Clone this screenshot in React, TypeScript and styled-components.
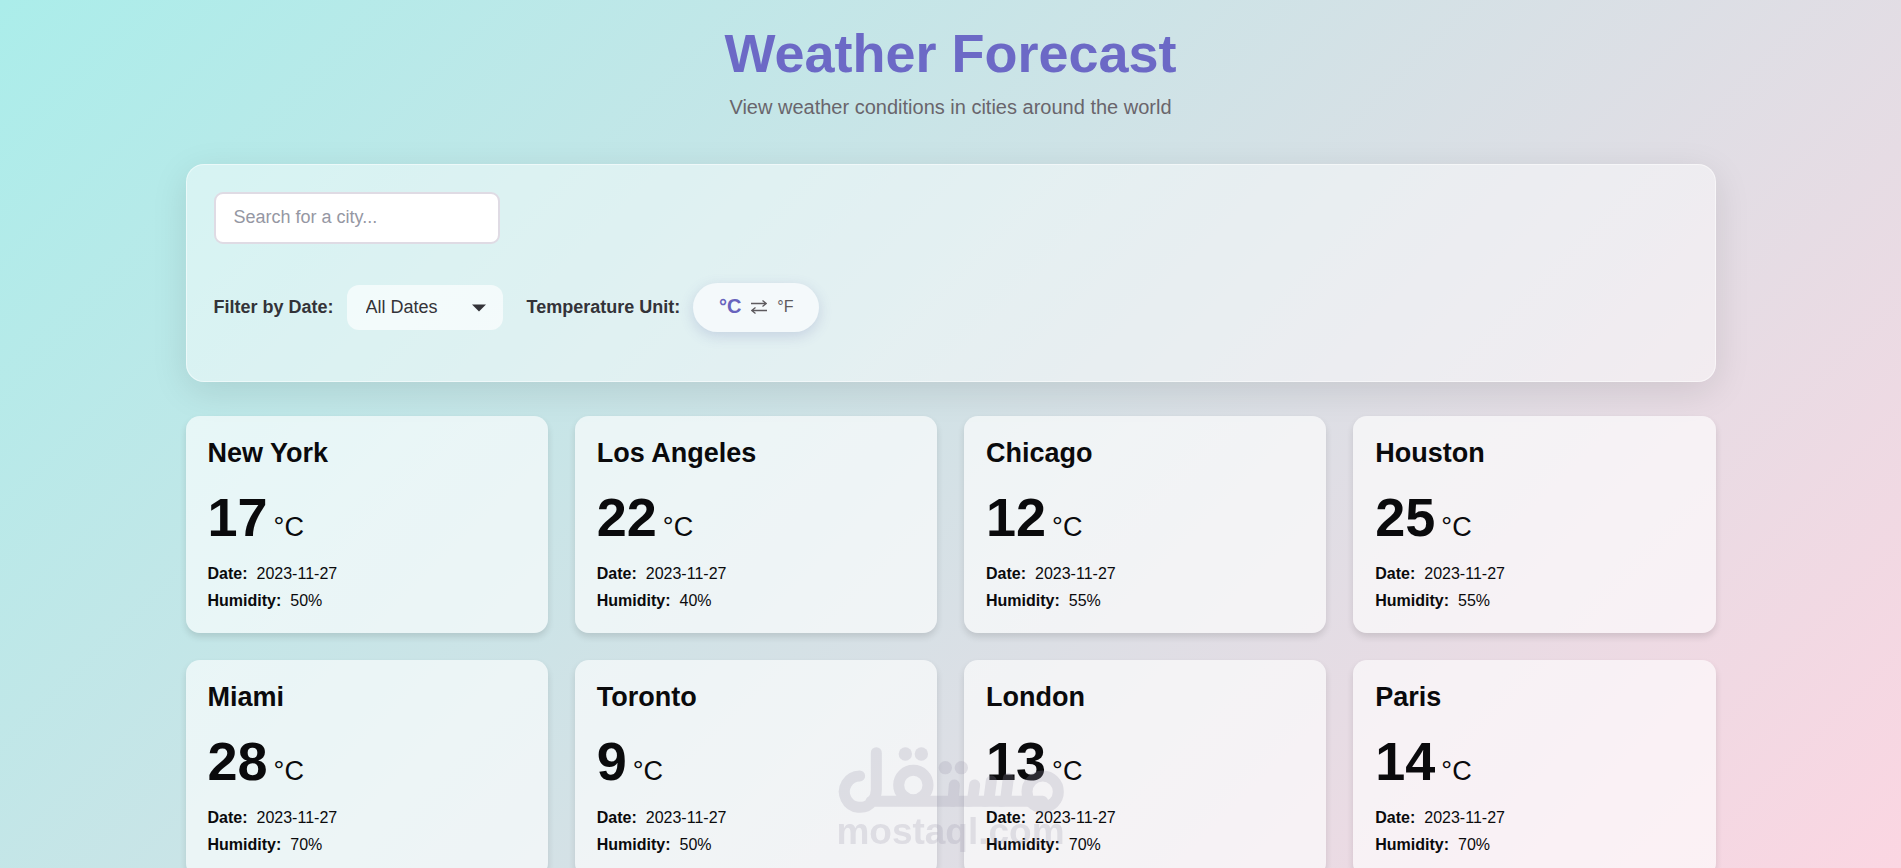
import React, { useState } from "react";
import styled, { createGlobalStyle } from "styled-components";

const GlobalStyle = createGlobalStyle`
  *, *::before, *::after { box-sizing: border-box; }
  html { scrollbar-width: none; }
  body {
    margin: 0;
    min-height: 100vh;
    font-family: "Liberation Sans", Arial, sans-serif;
    color: #0a0a0c;
    background: linear-gradient(135deg, #abedea 0%, #fbd6e2 100%) fixed;
  }
`;

const Page = styled.main`
  max-width: 1576px;
  margin: 0 auto;
  padding: 21px 23px 36px;
`;

const Header = styled.header`
  text-align: center;
  margin-bottom: 45px;
`;

const Title = styled.h1`
  margin: 0 0 10px;
  font-size: 54px;
  line-height: 64px;
  color: #6c69c6;
`;

const Subtitle = styled.p`
  margin: 0;
  font-size: 20px;
  line-height: 24px;
  color: #69656c;
`;

const Panel = styled.section`
  padding: 27px;
  min-height: 218px;
  border: 1px solid rgba(255, 255, 255, 0.5);
  border-radius: 18px;
  background: rgba(255, 255, 255, 0.45);
  box-shadow: 0 9px 36px rgba(0, 0, 0, 0.1);
  margin-bottom: 34px;
`;

const SearchInput = styled.input`
  display: block;
  width: 286px;
  height: 52px;
  padding: 0 18px 2px;
  border: 2px solid #dfdbe4;
  border-radius: 9px;
  background: #fff;
  color: #333338;
  font: 18px "Liberation Sans", Arial, sans-serif;
  &::placeholder { color: #9597a3; }
`;

const Filters = styled.div`
  display: flex;
  align-items: center;
  flex-wrap: wrap;
  gap: 24px;
  margin-top: 39px;
`;

const Field = styled.div`
  display: flex;
  align-items: center;
  gap: 13px;
`;

const FieldLabel = styled.label`
  font-size: 18px;
  font-weight: 700;
  color: #333338;
`;

const SelectWrap = styled.div`
  display: grid;
  align-items: center;
  > * { grid-area: 1 / 1; }
  > svg { justify-self: end; margin-right: 17px; pointer-events: none; }
`;

const Select = styled.select`
  appearance: none;
  width: 156px;
  height: 45px;
  padding: 0 40px 2px 19px;
  border: 0;
  border-radius: 12px;
  background: rgba(255, 255, 255, 0.65);
  color: #333338;
  font: 18px "Liberation Sans", Arial, sans-serif;
`;

const UnitToggle = styled.button`
  display: flex;
  align-items: center;
  justify-content: center;
  gap: 10px;
  width: 126px;
  height: 49px;
  padding: 0 0 2px;
  border: 0;
  border-radius: 25px;
  background: #f4f9fb;
  box-shadow: 0 4px 14px rgba(80, 90, 160, 0.2);
  font-family: inherit;
  color: #5d5a5e;
  cursor: pointer;
`;

const UnitOption = styled.span<{ $active: boolean }>`
  font-size: ${(p) => (p.$active ? 20 : 16)}px;
  font-weight: ${(p) => (p.$active ? 700 : 400)};
  color: ${(p) => (p.$active ? "#6863bd" : "#5d5a5e")};
`;

const Grid = styled.section`
  display: grid;
  grid-template-columns: repeat(auto-fill, minmax(315px, 1fr));
  gap: 27px;
`;

const Card = styled.article`
  padding: 21px 22px 19px;
  border-radius: 14px;
  background: rgba(255, 255, 255, 0.63);
  box-shadow: 0 4px 7px rgba(0, 0, 0, 0.12);
`;

const City = styled.h2`
  margin: 0 0 16px;
  font-size: 27px;
  line-height: 32px;
`;

const Temperature = styled.p`
  display: flex;
  align-items: baseline;
  gap: 6px;
  margin: 0 0 11px;
  line-height: 64px;
  font-size: 54px;
  font-weight: 700;
`;

const Degree = styled.span`
  font-size: 27px;
  line-height: 32px;
  font-weight: 400;
`;

const Detail = styled.p`
  display: flex;
  gap: 9px;
  margin: 0;
  font-size: 16px;
  line-height: 27px;
`;

const Watermark = styled.div`
  position: fixed;
  left: 50%;
  bottom: 18px;
  width: 230px;
  transform: translateX(-50%);
  display: flex;
  flex-direction: column;
  align-items: center;
  color: #9c98ac;
  opacity: 0.24;
  pointer-events: none;
  font-size: 37px;
  line-height: 36px;
  font-weight: 700;
`;

const CaretIcon = () => (
  <svg width="14" height="8" viewBox="0 0 14 8" aria-hidden="true">
    <path d="M0 .5h14L7 7.5z" fill="#333338" />
  </svg>
);

const SwapIcon = () => (
  <svg width="16" height="14" viewBox="0 0 16 14" fill="none" stroke="currentColor" strokeWidth="1.3" aria-hidden="true">
    <path d="M0 3.5h15M11.5.5l3.8 3-3.8 3M16 10.5H1M4.5 7.5l-3.8 3 3.8 3" />
  </svg>
);

const MarkLogo = () => (
  <svg width="228" height="68" viewBox="48 48 684 204" fill="none" stroke="currentColor" strokeWidth="33" strokeLinecap="round" aria-hidden="true">
    <path d="M116 138a47 47 0 1 0 38 76c8-10 12-20 12-34V68M150 214H665" />
    <circle cx="277" cy="165" r="44" />
    <circle cx="665" cy="185" r="47" />
    <path d="M400 165l-4 49M461 165l-5 35q-2 14-14 14M511 153l-6 47q-2 14-14 14M562 145l-7 55q-2 14-14 14" />
    <g fill="currentColor" stroke="none">
      <circle cx="253" cy="72" r="20" />
      <circle cx="301" cy="72" r="20" />
      <circle cx="373" cy="113" r="20" />
      <circle cx="421" cy="113" r="20" />
    </g>
  </svg>
);

type Weather = { city: string; celsius: number; humidity: number };

const date = "2023-11-27";
const forecasts: Weather[] = [
  { city: "New York", celsius: 17, humidity: 50 },
  { city: "Los Angeles", celsius: 22, humidity: 40 },
  { city: "Chicago", celsius: 12, humidity: 55 },
  { city: "Houston", celsius: 25, humidity: 55 },
  { city: "Miami", celsius: 28, humidity: 70 },
  { city: "Toronto", celsius: 9, humidity: 50 },
  { city: "London", celsius: 13, humidity: 70 },
  { city: "Paris", celsius: 14, humidity: 70 },
];

export default function App() {
  const [query, setQuery] = useState("");
  const [metric, setMetric] = useState(true);
  const visible = forecasts.filter((f) => f.city.toLowerCase().includes(query.toLowerCase()));

  return (
    <>
      <GlobalStyle />
      <Page>
        <Header>
          <Title>Weather Forecast</Title>
          <Subtitle>View weather conditions in cities around the world</Subtitle>
        </Header>
        <Panel>
          <SearchInput
            type="text"
            aria-label="Search for a city"
            placeholder="Search for a city..."
            value={query}
            onChange={(e) => setQuery(e.target.value)}
          />
          <Filters>
            <Field>
              <FieldLabel htmlFor="date-filter">Filter by Date:</FieldLabel>
              <SelectWrap>
                <Select id="date-filter" defaultValue="all">
                  <option value="all">All Dates</option>
                  <option value={date}>{date}</option>
                </Select>
                <CaretIcon />
              </SelectWrap>
            </Field>
            <Field>
              <FieldLabel htmlFor="unit-toggle">Temperature Unit:</FieldLabel>
              <UnitToggle id="unit-toggle" type="button" onClick={() => setMetric(!metric)}>
                <UnitOption $active={metric}>°C</UnitOption>
                <SwapIcon />
                <UnitOption $active={!metric}>°F</UnitOption>
              </UnitToggle>
            </Field>
          </Filters>
        </Panel>
        <Grid>
          {visible.map((f) => (
            <Card key={f.city}>
              <City>{f.city}</City>
              <Temperature>
                {metric ? f.celsius : Math.round(f.celsius * 1.8 + 32)}
                <Degree>{metric ? "°C" : "°F"}</Degree>
              </Temperature>
              <Detail><strong>Date:</strong><span>{date}</span></Detail>
              <Detail><strong>Humidity:</strong><span>{f.humidity}%</span></Detail>
            </Card>
          ))}
        </Grid>
      </Page>
      <Watermark>
        <MarkLogo />
        <span>mostaql.com</span>
      </Watermark>
    </>
  );
}
